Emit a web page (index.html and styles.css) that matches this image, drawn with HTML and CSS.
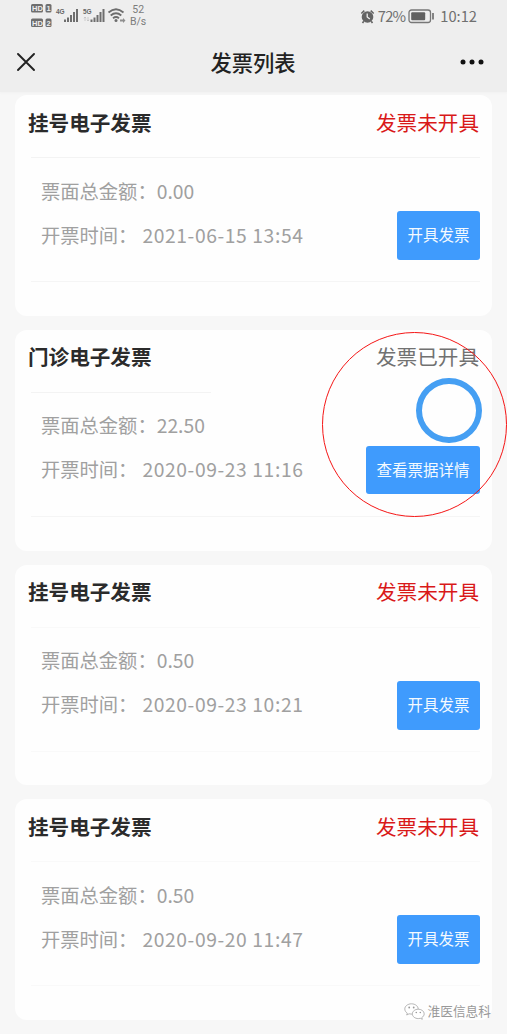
FILE: index.html
```html
<!DOCTYPE html>
<html lang="zh-CN">
<head>
<meta charset="utf-8">
<title>发票列表</title>
<link rel="stylesheet" href="styles.css">
</head>
<body>
<header class="top">
  <div class="status">
    <svg class="status-icons" width="97" height="28" viewBox="0 0 97 28">
      <g fill="#6e6e6e">
        <rect x="1" y="4" width="12" height="8.5" rx="1.5"/><rect x="15.500" y="4" width="6" height="8.500" rx="1.500"/>
        <rect x="1" y="18.500" width="12" height="8.500" rx="1.500"/><rect x="15.500" y="18.500" width="6" height="8.500" rx="1.500"/>
        <path d="M34 19.500h2v2.500h-2zM37 17.500h2V22h-2zM40 15h2v7h-2zM43 12h2v10h-2zM46 9h2v13h-2zM60.500 19.500h2v2.500h-2zM63.500 17.500h2V22h-2zM66.500 15h2v7h-2zM69.500 12h2v10h-2zM72.500 9h2v13h-2z"/>
        <circle cx="86" cy="20.500" r="1.500"/>
        <path d="M90 19.500h3v-1.500l2.500 2.500-2.500 2.500v-1.500h-3z" opacity=".75"/>
      </g>
      <g class="badge"><text x="2" y="11">HD</text><text x="16.500" y="11">1</text><text x="2" y="25.500">HD</text><text x="16.500" y="25.500">2</text></g>
      <g class="net"><text x="26" y="14">4G</text><text x="53" y="14">5G</text></g>
      <path d="M55 17v4m-1.200-2.800L55 17l1.200 1.200M58 21v-4m-1.200 2.800L58 21l1.200-1.200" fill="none" stroke="#c2c2c2" stroke-width=".8"/>
      <path d="M78.500 12.500q7.500-6.500 15 0M80.700 15.500q5.300-4.500 10.600 0M83 18.200q3-2.500 6 0" fill="none" stroke="#6e6e6e" stroke-width="1.800"/>
    </svg>
    <div class="speed"><span>52</span><span>B/s</span></div>
    <div class="right">
      <svg width="15" height="15" viewBox="0 0 15 15"><circle cx="7.500" cy="8" r="5.800" fill="#646464"/><path d="M1.300 4.500 4.300 1.700M13.700 4.500 10.700 1.700M3.800 12.200 2.500 14M11.200 12.200 12.500 14" stroke="#646464" stroke-width="1.600"/><path d="M7.200 4.500V8l2.600 2" fill="none" stroke="#eee" stroke-width="1.300"/></svg>
      <span class="pct">72%</span>
      <svg class="battery" width="27" height="15" viewBox="0 0 27 15"><rect x="1" y="1" width="21.500" height="12.500" rx="2.500" fill="none" stroke="#777" stroke-width="1.300"/><rect x="3.200" y="3.200" width="14" height="8.100" rx="1" fill="#606060"/><path d="M25 4v6.500" stroke="#777" stroke-width="1.800"/></svg>
      <span>10:12</span>
    </div>
  </div>
  <nav class="nav">
    <svg width="18" height="18" viewBox="0 0 18 18"><path d="M1 1l16 16M17 1L1 17" stroke="#222" stroke-width="1.900" stroke-linecap="round"/></svg>
    <h1>发票列表</h1>
    <svg class="more" width="24" height="6" viewBox="0 0 24 6"><g fill="#111"><circle cx="3" cy="3" r="2.500"/><circle cx="12" cy="3" r="2.500"/><circle cx="21" cy="3" r="2.500"/></g></svg>
  </nav>
</header>
<main class="list">
  <section class="card">
    <div class="head"><h2>挂号电子发票</h2><span class="state due">发票未开具</span></div>
    <div class="body">
      <div class="info"><p><span>票面总金额：</span><span class="amount">0.00</span></p><p><span>开票时间：</span><span class="date">2021-06-15 13:54</span></p></div>
      <button class="btn">开具发票</button>
    </div>
  </section>
  <section class="card">
    <div class="head short"><h2>门诊电子发票</h2><span class="state">发票已开具</span></div>
    <div class="body">
      <div class="info"><p><span>票面总金额：</span><span class="amount">22.50</span></p><p><span>开票时间：</span><span class="date">2020-09-23 11:16</span></p></div>
      <button class="btn wide">查看票据详情</button>
    </div>
    <span class="ring"></span>
    <span class="marker"></span>
  </section>
  <section class="card faint">
    <div class="head"><h2>挂号电子发票</h2><span class="state due">发票未开具</span></div>
    <div class="body">
      <div class="info"><p><span>票面总金额：</span><span class="amount">0.50</span></p><p><span>开票时间：</span><span class="date">2020-09-23 10:21</span></p></div>
      <button class="btn">开具发票</button>
    </div>
  </section>
  <section class="card faint">
    <div class="head"><h2>挂号电子发票</h2><span class="state due">发票未开具</span></div>
    <div class="body">
      <div class="info"><p><span>票面总金额：</span><span class="amount">0.50</span></p><p><span>开票时间：</span><span class="date">2020-09-20 11:47</span></p></div>
      <button class="btn">开具发票</button>
    </div>
    <div class="watermark">
      <svg width="21" height="17" viewBox="0 0 21 17"><g fill="#fff" stroke="#a5a5a5" stroke-width=".8"><path d="M7.500.8C3.800.8.800 3.100.800 6c0 1.700 1 3.200 2.500 4.100L2.700 12l2.400-1.200c.8.200 1.600.3 2.400.3 3.700 0 6.700-2.300 6.700-5.100S11.200.8 7.500.8z"/><path d="M14.300 6.200c-3.300 0-6 2.100-6 4.700s2.700 4.700 6 4.700c.7 0 1.400-.1 2-.3l2 1-.5-1.700c1.400-.9 2.400-2.200 2.400-3.700 0-2.600-2.600-4.700-5.900-4.700z"/></g><g fill="#999"><circle cx="5.200" cy="4.500" r=".9"/><circle cx="9.700" cy="4.500" r=".9"/><circle cx="12.300" cy="9.500" r=".8"/><circle cx="16.300" cy="9.500" r=".8"/></g></svg>
      <span>淮医信息科</span>
    </div>
  </section>
</main>
</body>
</html>
```
FILE: styles.css
```css
* { box-sizing: border-box; }
body {
  margin: 0;
  height: 1034px;
  overflow: hidden;
  background: #f7f7f7;
  font-family: "Noto Sans CJK SC", sans-serif;
  color: #2b2b2b;
}
h1, h2, p { margin: 0; }
svg { display: block; flex: none; }
.top { height: 92px; background: #eee; box-shadow: 0 1px 2px #f1f1f1; }
.status {
  display: flex;
  height: 32px;
  padding: 0 30px;
  color: #707070;
}
.badge { fill: #eee; font: bold 7.5px "Liberation Sans", sans-serif; }
.net { fill: #666; font: bold 6.5px "Liberation Sans", sans-serif; }
.speed {
  display: flex;
  flex-direction: column;
  align-items: center;
  padding: 4px 0 0 3px;
  font: 10.5px/12px Roboto, sans-serif;
  color: #7c7c7c;
}
.right {
  display: flex;
  align-items: center;
  margin-left: auto;
  font-size: 14.7px;
  line-height: 30px;
}
.pct { margin-left: 3px; letter-spacing: -.8px; }
.battery { margin: 0 5px 0 3px; }
.nav {
  display: flex;
  align-items: center;
  justify-content: space-between;
  height: 60px;
  padding: 0 23px 0 17px;
}
.nav h1 { margin-left: 11px; font-size: 21.3px; font-weight: 500; line-height: 30px; color: #222; }
.list {
  display: flex;
  flex-direction: column;
  gap: 14px;
  padding: 3px 15px 0;
}
.card {
  position: relative;
  height: 220.8px;
  padding: 0 12px 0 13px;
  border-radius: 12px;
  background: #fefefe;
}
.head {
  display: flex;
  justify-content: space-between;
  height: 63px;
  padding-top: 11.5px;
  background: linear-gradient(#f3f3f3, #f3f3f3) 3px 100% / 100% 1px no-repeat;
}
.head.short { background-size: 180px 1px; }
.head h2 { font-size: 20.6px; line-height: 30px; font-weight: 700; }
.state { margin-right: 1px; font-size: 20.6px; line-height: 30px; color: #717171; }
.due { color: #d91919; }
.body {
  display: flex;
  justify-content: space-between;
  align-items: flex-start;
  height: 124px;
  margin-left: 3px;
  border-bottom: 1px solid #f5f5f5;
}
.faint .head { background-image: linear-gradient(#f9f9f9, #f9f9f9); }
.faint .body { border-color: #f9f9f9; }
.info {
  display: flex;
  flex-direction: column;
  gap: 14px;
  padding: 17.5px 0 0 10px;
}
.info p {
  display: flex;
  height: 30px;
  font-size: 19.3px;
  line-height: 30px;
  color: #a0a0a0;
  white-space: nowrap;
}
.date { margin-left: 5px; letter-spacing: .6px; }
.btn {
  flex: none;
  width: 83px;
  height: 49px;
  margin-top: 53px;
  padding: 0 0 2px;
  border: 0;
  border-radius: 3px;
  background: #3f9bfd;
  color: #f4faff;
  font: 15.5px/47px "Noto Sans CJK SC", sans-serif;
}
.btn.wide { width: 114px; height: 48px; }
.ring {
  position: absolute;
  top: 48.5px;
  right: 10.5px;
  width: 65.5px;
  height: 65px;
  border: 6.5px solid #459ff3;
  border-radius: 50%;
}
.marker {
  position: absolute;
  z-index: 1;
  top: 2px;
  right: -15px;
  width: 185px;
  height: 185px;
  border: 1px solid #f51616;
  border-radius: 50%;
}
.watermark {
  position: absolute;
  right: 1px;
  bottom: -1px;
  display: flex;
  align-items: center;
  gap: 3px;
  font-size: 12.7px;
  line-height: 20px;
  color: #999;
}
```
